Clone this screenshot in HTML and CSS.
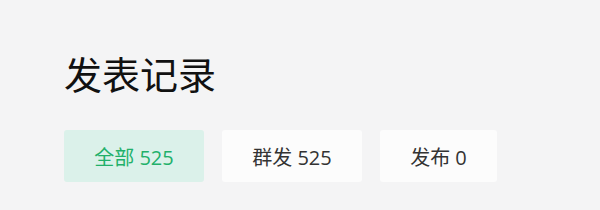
FILE: index.html
```html
<!DOCTYPE html>
<html lang="zh">
<head>
<meta charset="utf-8">
<link rel="stylesheet" href="styles.css">
</head>
<body>
<div class="page">
  <h1 class="title">发表记录</h1>
  <div class="tabs">
    <div class="tab active">全部 525</div>
    <div class="tab">群发 525</div>
    <div class="tab narrow">发布 0</div>
  </div>
</div>
</body>
</html>
```
FILE: styles.css
```css
html, body {
  margin: 0;
  padding: 0;
  background: #f4f4f5;
  font-family: "Noto Sans CJK SC", "Noto Sans", sans-serif;
}
.page {
  width: 600px;
  height: 210px;
  padding: 47px 0 0 64px;
  box-sizing: border-box;
}
.title {
  margin: 0;
  font-size: 38px;
  font-weight: 400;
  line-height: 52px;
  color: #111;
}
.tabs {
  display: flex;
  gap: 18px;
  margin-top: 31px;
}
.tab {
  width: 140px;
  height: 52px;
  display: flex;
  align-items: center;
  justify-content: center;
  background: #fcfcfc;
  border-radius: 3px;
  font-family: "Open Sans", "Noto Sans CJK SC", sans-serif;
  font-size: 20px;
  color: #333;
}
.tab.narrow {
  width: 117px;
}
.tab.active {
  background: #dbf1ea;
  color: #22b06a;
}
```
